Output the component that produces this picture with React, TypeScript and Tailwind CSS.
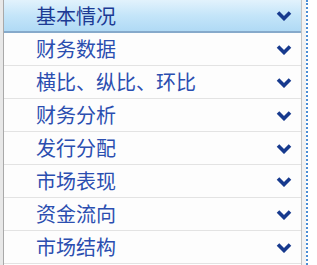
import React from "react";

const items = ["基本情况", "财务数据", "横比、纵比、环比", "财务分析", "发行分配", "市场表现", "资金流向", "市场结构"];

function Chevron() {
  return (
    <svg width="16" height="11" viewBox="0 0 16 11" className="shrink-0">
      <polyline points="2,2.5 8,8.5 14,2.5" fill="none" stroke="#173a8e" strokeWidth="3.6" strokeLinejoin="miter" strokeLinecap="butt" />
    </svg>
  );
}

export default function App() {
  return (
    <div
      className="flex w-[317px] h-[265px] overflow-hidden bg-white"
      style={{ fontFamily: '"Noto Sans CJK SC", "Noto Sans", sans-serif' }}
    >
      <div className="w-[4px] h-full bg-[#e8e8e8] border-r border-[#a9a9a9]" />
      <div className="flex flex-col w-[297px]">
        {items.map((t, i) =>
          i === 0 ? (
            <div
              key={t}
              className="flex items-center justify-between h-[33px] pl-[32px] pr-[9px] bg-gradient-to-b from-[#e2f2fc] via-[#c4e5f9] to-[#b0daf5] border-b-2 border-[#86aacb]"
            >
              <span className="text-[20px] leading-none text-[#1c3a94]">{t}</span>
              <Chevron />
            </div>
          ) : (
            <div
              key={t}
              className="flex items-center justify-between h-[33px] pl-[32px] pr-[9px] bg-[#fdfdfd] border-b border-[#e3e3e3]"
            >
              <span className="text-[20px] leading-none text-[#2b4eb0]">{t}</span>
              <Chevron />
            </div>
          )
        )}
      </div>
      <div className="w-[5px] h-full bg-[#f2f2f2] border-l border-[#c6c6c6]" />
      <div className="w-[2px] h-full border-l-2 border-dotted border-[#4d8fd6]" />
      <div className="flex-1 h-full bg-white" />
    </div>
  );
}
